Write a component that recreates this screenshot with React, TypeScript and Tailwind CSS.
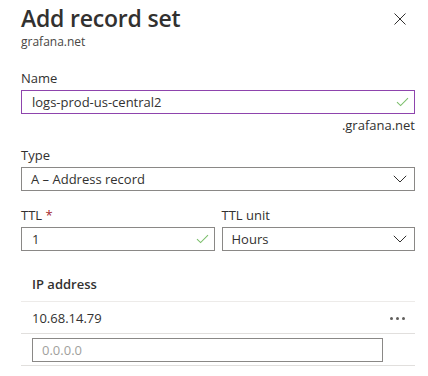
import { useState } from 'react';

const Check = () => (
  <svg width="13" height="10" viewBox="0 0 13 10" fill="none">
    <path d="M1 5.2 L4.6 8.6 L12 1.2" stroke="#7cbf6c" strokeWidth="1.1" />
  </svg>
);

const Chevron = () => (
  <svg width="14" height="8" viewBox="0 0 14 8" fill="none">
    <path d="M0.8 0.8 L7 7 L13.2 0.8" stroke="#323130" strokeWidth="1" />
  </svg>
);

function Select({ value }: { value: string }) {
  return (
    <div className="flex h-[24px] items-center justify-between border border-[#8a8886] pl-[9px] pr-[7px] text-[13px] leading-[18px]">
      <span>{value}</span>
      <Chevron />
    </div>
  );
}

export default function App() {
  const [name] = useState('logs-prod-us-central2');

  return (
    <div className="h-[376px] w-[428px] overflow-hidden bg-white pl-[21px] pr-[13px] pt-[4px] font-['Open_Sans',sans-serif] text-[#323130]">
      <div className="flex items-start justify-between">
        <div>
          <h1 className="text-[23px] font-semibold leading-[28px] tracking-[-0.2px]">Add record set</h1>
          <p className="mt-[2px] text-[12px] leading-[16px] text-[#484644]">grafana.net</p>
        </div>
        <button className="mr-[9px] mt-[9px] p-0">
          <svg width="12" height="12" viewBox="0 0 12 12" fill="none">
            <path d="M0.5 0.5 L11.5 11.5 M11.5 0.5 L0.5 11.5" stroke="#323130" strokeWidth="1" />
          </svg>
        </button>
      </div>

      <label className="mt-[19px] block text-[13px] leading-[18px]">Name</label>
      <div className="mt-[3px] flex h-[24px] items-center justify-between border border-[#8e44ad] pl-[10px] pr-[5px] text-[13px] leading-[18px]">
        <span>{name}</span>
        <Check />
      </div>
      <div className="mt-[2px] text-right text-[13px] leading-[18px]">.grafana.net</div>

      <label className="mt-[12px] block text-[13px] leading-[18px]">Type</label>
      <div className="mt-[3px]">
        <Select value="A – Address record" />
      </div>

      <div className="mt-[15px] grid grid-cols-2 gap-[7px]">
        <div>
          <label className="block text-[13px] leading-[18px]">
            TTL <span className="text-[#a4262c]">*</span>
          </label>
          <div className="mt-[3px] flex h-[24px] items-center justify-between border border-[#8a8886] pl-[10px] pr-[5px] text-[13px] leading-[18px]">
            <span>1</span>
            <Check />
          </div>
        </div>
        <div>
          <label className="block text-[13px] leading-[18px]">TTL unit</label>
          <div className="mt-[3px]">
            <Select value="Hours" />
          </div>
        </div>
      </div>

      <div className="mt-[24px] text-[13px] leading-[18px]">
        <div className="border-b border-[#edebe9] pb-[8px] pl-[11px] font-semibold">IP address</div>
        <div className="flex items-center justify-between border-b border-[#e1dfdd] pb-[6px] pl-[11px] pr-[10px] pt-[7px]">
          <span>10.68.14.79</span>
          <div className="flex gap-[3px]">
            <span className="h-[3px] w-[3px] rounded-full bg-[#605e5c]" />
            <span className="h-[3px] w-[3px] rounded-full bg-[#605e5c]" />
            <span className="h-[3px] w-[3px] rounded-full bg-[#605e5c]" />
          </div>
        </div>
        <div className="border-b border-[#e1dfdd] pb-[3px] pl-[11px] pt-[4px]">
          <input
            placeholder="0.0.0.0"
            className="h-[24px] w-[351px] border border-[#8a8886] px-[9px] text-[13px] outline-none placeholder:text-[#a19f9d]"
          />
        </div>
      </div>
    </div>
  );
}
